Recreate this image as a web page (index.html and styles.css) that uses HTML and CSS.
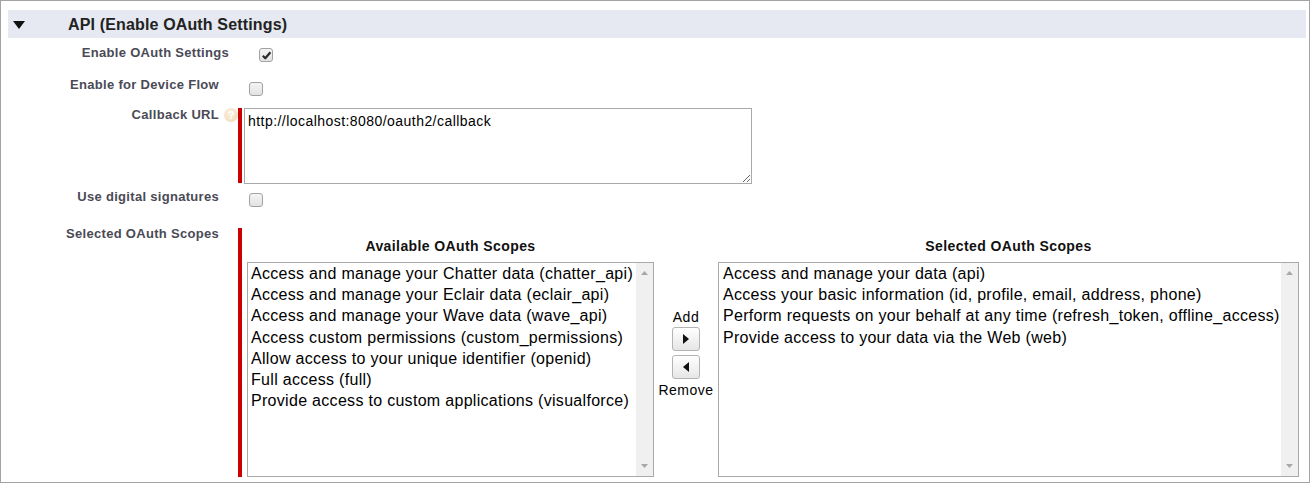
FILE: index.html
```html
<!DOCTYPE html>
<html>
<head>
<meta charset="utf-8">
<link rel="stylesheet" href="styles.css">
</head>
<body>
<div class="frame">
  <div class="section-head">
    <svg class="twisty" width="12" height="8" viewBox="0 0 12 8"><polygon points="0,0 12,0 6,8" fill="#111"/></svg>
    <h2 class="section-title">API (Enable OAuth Settings)</h2>
  </div>

  <div class="row row-oauth">
    <div class="label label-wide">Enable OAuth Settings</div>
    <div class="help-cell"></div>
    <div class="field">
      <span class="cb cb-top3">
        <svg width="11" height="11" viewBox="0 0 11 11"><path d="M1.8 5.8 L4.3 8.3 L9.4 2.2" fill="none" stroke="#2a2a2a" stroke-width="2.2" stroke-linejoin="round"/></svg>
      </span>
    </div>
  </div>

  <div class="row row-device">
    <div class="label">Enable for Device Flow</div>
    <div class="help-cell"></div>
    <div class="field"><span class="cb cb-top5"></span></div>
  </div>

  <div class="row row-callback">
    <div class="label">Callback URL</div>
    <div class="help-cell"><span class="help">?</span></div>
    <div class="required req-url">
      <textarea class="url-input" readonly>http://localhost:8080/oauth2/callback</textarea>
    </div>
  </div>

  <div class="row row-sig">
    <div class="label">Use digital signatures</div>
    <div class="help-cell"></div>
    <div class="field"><span class="cb cb-top4"></span></div>
  </div>

  <div class="row row-scopes">
    <div class="label">Selected OAuth Scopes</div>
    <div class="help-cell"></div>
    <div class="required req-scopes">
      <div class="picker">
        <div class="pick-col col-available">
          <div class="pick-title">Available OAuth Scopes</div>
          <div class="listbox">
            <div class="list-items">
              <div class="opt">Access and manage your Chatter data (chatter_api)</div>
              <div class="opt">Access and manage your Eclair data (eclair_api)</div>
              <div class="opt">Access and manage your Wave data (wave_api)</div>
              <div class="opt">Access custom permissions (custom_permissions)</div>
              <div class="opt">Allow access to your unique identifier (openid)</div>
              <div class="opt">Full access (full)</div>
              <div class="opt">Provide access to custom applications (visualforce)</div>
            </div>
            <div class="scrollbar">
              <svg width="7" height="4" viewBox="0 0 7 4"><polygon points="0,4 7,4 3.5,0" fill="#a8a8a8"/></svg>
              <svg width="7" height="4" viewBox="0 0 7 4"><polygon points="0,0 7,0 3.5,4" fill="#a8a8a8"/></svg>
            </div>
          </div>
        </div>

        <div class="pick-buttons">
          <div class="btn-label">Add</div>
          <button class="arrow-btn" type="button" aria-label="Add">
            <svg width="6" height="10" viewBox="0 0 6 10"><polygon points="0,0 6,5 0,10" fill="#111"/></svg>
          </button>
          <button class="arrow-btn" type="button" aria-label="Remove">
            <svg width="6" height="10" viewBox="0 0 6 10"><polygon points="6,0 0,5 6,10" fill="#111"/></svg>
          </button>
          <div class="btn-label">Remove</div>
        </div>

        <div class="pick-col col-selected">
          <div class="pick-title">Selected OAuth Scopes</div>
          <div class="listbox">
            <div class="list-items">
              <div class="opt">Access and manage your data (api)</div>
              <div class="opt">Access your basic information (id, profile, email, address, phone)</div>
              <div class="opt">Perform requests on your behalf at any time (refresh_token, offline_access)</div>
              <div class="opt">Provide access to your data via the Web (web)</div>
            </div>
            <div class="scrollbar">
              <svg width="7" height="4" viewBox="0 0 7 4"><polygon points="0,4 7,4 3.5,0" fill="#a8a8a8"/></svg>
              <svg width="7" height="4" viewBox="0 0 7 4"><polygon points="0,0 7,0 3.5,4" fill="#a8a8a8"/></svg>
            </div>
          </div>
        </div>
      </div>
    </div>
  </div>
</div>
</body>
</html>
```

FILE: styles.css
```css
* { box-sizing: border-box; }

html, body {
  margin: 0;
  padding: 0;
  background: #fff;
}

body {
  font-family: "Liberation Sans", Arial, sans-serif;
  color: #000;
}

.frame {
  width: 1310px;
  height: 483px;
  border: 1px solid #a3a3a3;
  padding: 9px 3px 0 7px;
  overflow: hidden;
}

.section-head {
  height: 28px;
  background: #e6e9f1;
  display: flex;
  align-items: center;
}

.twisty {
  margin-left: 5px;
  margin-top: 2px;
  flex: none;
}

.section-title {
  margin: 0 0 0 43px;
  padding-top: 2px;
  font-size: 16px;
  line-height: 26px;
  font-weight: bold;
  color: #222;
  letter-spacing: 0.15px;
}

.row {
  display: flex;
  align-items: flex-start;
}

.row-oauth { margin-top: 7px; height: 32px; }
.row-device { height: 30px; }
.row-callback { height: 82px; }
.row-sig { height: 37px; }

.label {
  width: 211px;
  flex: none;
  text-align: right;
  font-size: 13px;
  line-height: 16px;
  font-weight: bold;
  color: #4a4a56;
  letter-spacing: 0.3px;
}

.label-wide { width: 221px; }

.help-cell {
  width: 19px;
  flex: none;
}

.field {
  padding-left: 11px;
}

.cb {
  display: flex;
  align-items: center;
  justify-content: center;
  width: 14px;
  height: 14px;
  border: 1px solid #a2a2a2;
  border-radius: 3px;
  background: linear-gradient(#f4f4f4, #e2e2e2);
}

.cb-top3 { margin-top: 3px; }
.cb-top4 { margin-top: 4px; }
.cb-top5 { margin-top: 5px; }

.help {
  display: flex;
  align-items: center;
  justify-content: center;
  width: 14px;
  height: 14px;
  margin: 1px 0 0 5px;
  border-radius: 50%;
  background: radial-gradient(circle at 40% 35%, #fcefdf, #f0d6b2);
  color: #fff;
  font-size: 11px;
  font-weight: bold;
  line-height: 14px;
}

.required {
  border-left: 4px solid #cc0000;
}

.req-url {
  margin-top: 1px;
  padding-left: 2px;
  height: 75px;
}

.url-input {
  display: block;
  width: 508px;
  height: 76px;
  margin: 0;
  border: 1px solid #a9a9a9;
  padding: 4px 3px 2px;
  font-family: "Liberation Sans", Arial, sans-serif;
  font-size: 14px;
  line-height: 16px;
  letter-spacing: 0.45px;
  color: #000;
  resize: both;
  outline: none;
}

.req-scopes {
  margin-top: 2px;
  padding-left: 5px;
  height: 249px;
}

.picker {
  display: flex;
}

.pick-col {
  display: flex;
  flex-direction: column;
}

.col-available { width: 407px; }
.col-selected { width: 581px; }

.pick-title {
  height: 34px;
  padding-top: 10px;
  text-align: center;
  font-size: 14px;
  line-height: 17px;
  font-weight: bold;
  color: #111;
  letter-spacing: 0.4px;
}

.listbox {
  height: 215px;
  border: 1px solid #a9a9a9;
  display: flex;
  background: #fff;
}

.list-items {
  flex: 1;
  padding: 0 0 0 3px;
  overflow: hidden;
}

.col-selected .list-items { padding-left: 4px; }

.opt {
  font-size: 16px;
  line-height: 21.2px;
  letter-spacing: 0.3px;
  white-space: nowrap;
  color: #000;
}

.scrollbar {
  width: 17px;
  flex: none;
  background: #f0f0f0;
  display: flex;
  flex-direction: column;
  justify-content: space-between;
  align-items: center;
  padding: 8px 0 8px;
}

.pick-buttons {
  width: 64px;
  flex: none;
  display: flex;
  flex-direction: column;
  align-items: center;
  padding-top: 81px;
}

.btn-label {
  font-size: 14px;
  line-height: 16px;
  letter-spacing: 0.5px;
  color: #000;
}

.arrow-btn {
  display: flex;
  align-items: center;
  justify-content: center;
  width: 28px;
  height: 24px;
  margin: 2px 0 0;
  padding: 0;
  border: 1px solid #b4b4b4;
  border-radius: 3px;
  background: linear-gradient(#ffffff, #e6e6e6);
}

.arrow-btn + .arrow-btn { margin-top: 4px; }
.arrow-btn + .btn-label { margin-top: 3px; }
```
